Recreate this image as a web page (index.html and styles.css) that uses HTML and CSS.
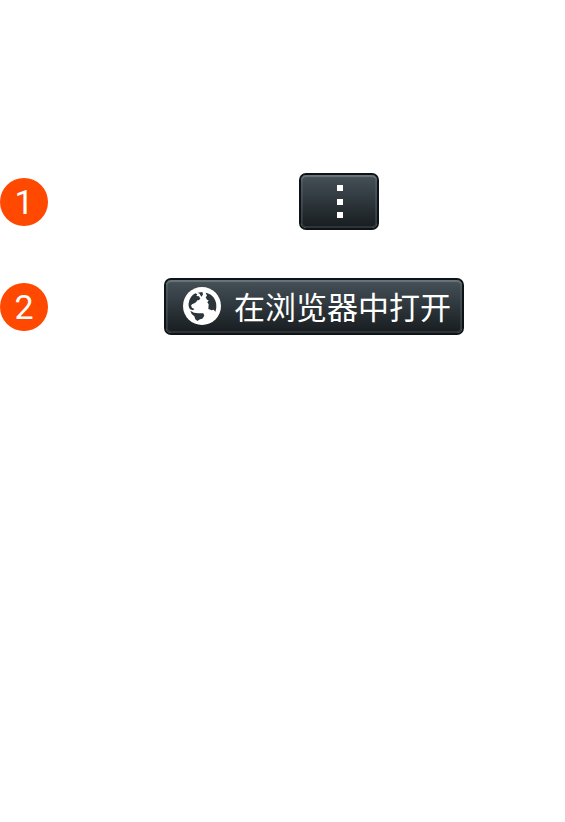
FILE: index.html
```html
<!DOCTYPE html>
<html lang="zh-CN">
<head>
<meta charset="utf-8">
<meta name="viewport" content="width=device-width, initial-scale=1">
<title>在浏览器中打开</title>
<link rel="stylesheet" href="styles.css">
</head>
<body>
<ol class="steps">
  <li class="step">
    <span class="badge">1</span>
    <button class="key key-menu" type="button" aria-label="菜单">
      <svg class="dots" viewBox="0 0 6 33" aria-hidden="true">
        <path d="M0 0h6v6H0zM0 14h6v6H0zM0 27h6v6H0z"/>
      </svg>
    </button>
  </li>
  <li class="step">
    <span class="badge">2</span>
    <button class="key key-open" type="button">
      <svg class="globe" viewBox="0 0 114 114" aria-hidden="true">
        <circle cx="57" cy="57" r="57" fill="#fff"/>
        <g fill="#2c353a">
          <path d="M17 49C19 34 27 24 37 19L43 22L40 27L48 28L52 35L47 40L43 40L39 46L34 49L27 52L24 56L27 62L34 66L30 70L21 67C17 61 16 54 17 49Z"/>
          <path d="M44 17L58 15L60 22L56 29L52 25L50 20Z"/>
          <path d="M68 17C83 20 95 30 99 47C101 57 100 66 97 74L92 68L86 70L76 66L77 52L73 46L77 40L72 38L68 31L72 26Z"/>
          <path d="M22 71L33 77L46 79L61 79L64 86L58 95L51 97L43 102L37 97L34 88L26 81Z"/>
        </g>
      </svg>
      <span>在浏览器中打开</span>
    </button>
  </li>
</ol>
</body>
</html>
```
FILE: styles.css
```css
body {
  margin: 0;
  background: #fff;
  font-family: Roboto, "Noto Sans CJK SC", sans-serif;
}

.steps {
  display: grid;
  gap: 48px;
  margin: 0;
  padding: 173px 0 0;
  list-style: none;
}

.step {
  display: flex;
  align-items: center;
}

.badge {
  width: 48px;
  height: 48px;
  border-radius: 50%;
  background: #ff4800;
  color: #fff;
  font-size: 34px;
  line-height: 48px;
  text-align: center;
}

.key {
  display: flex;
  align-items: center;
  box-sizing: border-box;
  height: 57px;
  border: 2px solid #0d1316;
  border-radius: 7px;
  background: linear-gradient(#455158, #171c1f) padding-box;
  box-shadow: inset 0 2px 1px #69747a, inset 0 0 0 2px rgba(110, 125, 132, 0.25);
  color: #fff;
  font: 31px/38px "Noto Sans CJK SC", sans-serif;
  white-space: nowrap;
}

.key-menu {
  width: 80px;
  justify-content: center;
  margin-left: 251px;
  padding: 0 0 0 2px;
}

.key-open {
  gap: 13px;
  margin-left: 116px;
  padding: 0 11px 2px 17px;
}

.dots {
  width: 6px;
  height: 33px;
  fill: #fff;
}

.globe {
  width: 38px;
  height: 38px;
}
```
